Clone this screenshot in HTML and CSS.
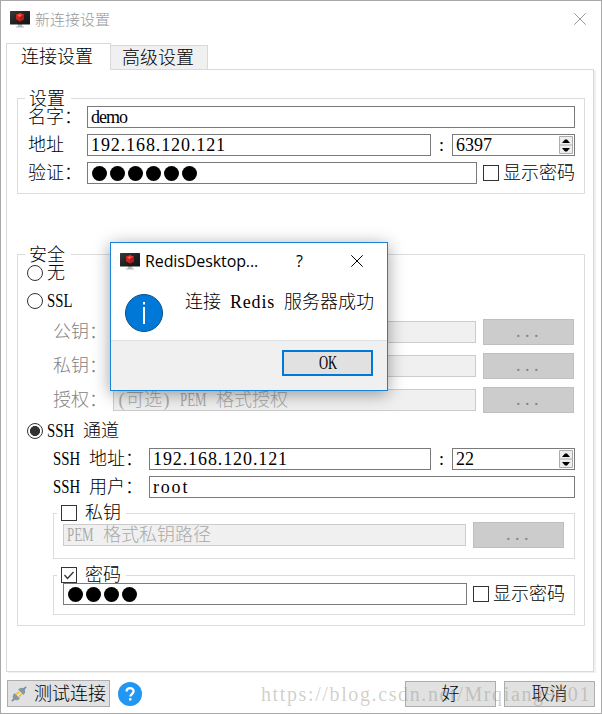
FILE: index.html
```html
<!DOCTYPE html>
<html lang="zh-CN">
<head>
<meta charset="utf-8">
<title>新连接设置</title>
<link rel="stylesheet" href="styles.css">
</head>
<body>
<svg class="defs" width="0" height="0">
  <defs>
    <linearGradient id="screen" x1="0" y1="0" x2="1" y2="1"><stop offset="0" stop-color="#3a3a3a"/><stop offset=".5" stop-color="#222"/><stop offset="1" stop-color="#111"/></linearGradient>
    <symbol id="monitor" viewBox="0 0 20 17">
      <path d="M8 13h4l.5 2.500H14v1H6v-1h1.500z" fill="#bbb"/>
      <rect width="20" height="13.500" rx=".5" fill="url(#screen)"/>
      <path d="M10 2.300l4 1.400v4.600l-4 2.200-4-2.200V3.700z" fill="#d3221c"/>
      <path d="M10 2.300l4 1.400-4 1.800-4-1.800z" fill="#ec3a33"/>
      <path d="M10 5.500v5l4-2.200V3.700z" fill="#b81a15"/>
      <path d="M8.500 4h2v1.500h-2z" fill="#ff827b"/>
    </symbol>
    <symbol id="close" viewBox="0 0 12 12"><path d="M.3.3l11.400 11.400M11.700.3L.3 11.700" stroke="currentColor" fill="none"/></symbol>
  </defs>
</svg>
<main class="window">
  <header class="titlebar">
    <svg class="app-icon"><use href="#monitor"/></svg>
    <span class="title">新连接设置</span>
    <svg class="close"><use href="#close"/></svg>
  </header>

  <nav class="tabs"><div class="tab active">连接设置</div><div class="tab">高级设置</div></nav>

  <section class="pane">
    <fieldset class="group basic">
      <legend>设置</legend>
      <div class="row"><label class="w59">名字：</label><div class="input grow"><span class="demo">demo</span></div></div>
      <div class="row"><label class="w59">地址</label><div class="input grow"><span class="ip">192.168.120.121</span></div><span class="colon">:</span>
        <div class="input spin">6397<svg class="arrows" viewBox="0 0 14 18"><path d="M.5.500h13v17H.500zM0 9h14" fill="#eee" stroke="#adadad"/><path d="M3 7h8L8 3.500H6zM3 12h8l-3 3.500H6z"/></svg></div></div>
      <div class="row"><label class="w59">验证：</label><div class="input grow dots"><i></i><i></i><i></i><i></i><i></i><i></i></div><span class="check"></span><span class="check-text">显示密码</span></div>
    </fieldset>

    <fieldset class="group security">
      <legend>安全</legend>
      <div class="option first"><span class="radio"></span>无</div>
      <div class="option second"><span class="radio"></span><span class="narrow ssl">SSL</span></div>
      <div class="indent keys">
        <div class="row key"><label class="w60">公钥：</label><div class="input off grow"></div><button class="browse">...</button></div>
        <div class="row key"><label class="w60">私钥：</label><div class="input off grow"></div><button class="browse">...</button></div>
        <div class="row key"><label class="w60">授权：</label><div class="input off grow"><span class="paren">(</span>可选<span class="paren">)</span><span class="sp"></span><span class="narrow pem">PEM</span><span class="sp"></span>格式授权</div><button class="browse">...</button></div>
      </div>
      <div class="option third"><span class="radio on"></span><span class="narrow ssh">SSH</span><span class="sp"></span>通道</div>
      <div class="indent ssh-fields">
        <div class="row"><label class="w96"><span class="narrow ssh">SSH</span><span class="sp"></span>地址：</label><div class="input grow"><span class="ip">192.168.120.121</span></div><span class="colon">:</span>
          <div class="input spin">22<svg class="arrows" viewBox="0 0 14 18"><path d="M.5.500h13v17H.500zM0 9h14" fill="#eee" stroke="#adadad"/><path d="M3 7h8L8 3.500H6zM3 12h8l-3 3.500H6z"/></svg></div></div>
        <div class="row"><label class="w96"><span class="narrow ssh">SSH</span><span class="sp"></span>用户：</label><div class="input grow"><span class="root">root</span></div></div>
        <fieldset class="sub private">
          <legend><span class="check"></span>私钥</legend>
          <div class="row key"><div class="input off grow"><span class="narrow pem">PEM</span><span class="sp"></span>格式私钥路径</div><button class="browse">...</button></div>
        </fieldset>
        <fieldset class="sub password">
          <legend><span class="check"><svg viewBox="0 0 14 14"><path d="M2.500 7l3 3.500L11.500 4" fill="none" stroke="#333" stroke-width="1.300"/></svg></span>密码</legend>
          <div class="row"><div class="input grow dots"><i></i><i></i><i></i><i></i></div><span class="check"></span><span class="check-text">显示密码</span></div>
        </fieldset>
      </div>
    </fieldset>
  </section>

  <footer class="actions">
    <button class="test"><svg width="16" height="16" viewBox="0 0 18 18"><path d="M1 17l4-4" stroke="#78909c" stroke-width="2"/><path d="M4 8l6 6c-2 2.500-5 2.500-7 .8S2 10 4 8zM8 4l6 6c2.500-2 2.500-5 .8-7S10 2 8 4z" fill="#839aa5"/><path d="M17 1l-3 3" stroke="#78909c" stroke-width="2"/><path d="M6 9.500l3-3M9 12l3-3" stroke="#ffb300" stroke-width="1.600"/></svg>测试连接</button>
    <svg class="help" viewBox="0 0 24 24"><circle cx="12" cy="12" r="12" fill="#2196f3"/><path d="M8.600 9.600C8.600 5.100 15.600 5.100 15.600 9.300c0 2.600-3.300 2.900-3.300 5.300" fill="none" stroke="#fff" stroke-width="2.300"/><path d="M11 16.200h2.500v2.300H11z" fill="#fff"/></svg>
    <button class="ok">好</button>
    <button class="cancel">取消</button>
  </footer>

  <div class="watermark">https://blog.csdn.net/Mrqiang9001</div>

  <div class="dialog">
    <header class="dialog-title"><svg class="app-icon"><use href="#monitor"/></svg><span class="dialog-name">RedisDesktop...</span><span class="question">?</span><svg class="close"><use href="#close"/></svg></header>
    <div class="dialog-body">
      <svg class="info" viewBox="0 0 38 38"><circle cx="19" cy="19" r="18.500" fill="#0078d7" stroke="#0b4f89"/><path d="M18 8h2v2.500h-2zM18 13h2v17h-2z" fill="#fff"/></svg>
      <p>连接<span class="sp"></span><span class="redis">Redis</span><span class="sp"></span>服务器成功</p>
    </div>
    <footer class="dialog-footer"><button><span class="narrow okay">OK</span></button></footer>
  </div>
</main>
</body>
</html>
```
FILE: styles.css
```css
* { box-sizing: border-box; }
body {
  margin: 0;
  background: #fff;
  color: #000;
  font: 300 18px/20px "Liberation Serif", "Noto Sans CJK SC", serif;
}
.defs { display: block; }
.window {
  position: relative;
  display: flex;
  flex-direction: column;
  width: 602px;
  height: 714px;
  border: 1px solid #a9a9a9;
  overflow: hidden;
  white-space: nowrap;
}
.titlebar {
  display: flex;
  align-items: center;
  height: 36px;
  padding: 0 15px 0 9px;
  color: #999;
}
.app-icon { width: 20px; height: 17px; flex: none; }
.title { margin-left: 5px; padding-top: 1px; font-size: 15px; flex: 1; }
.close { width: 12px; height: 12px; }

.tabs { display: flex; align-items: flex-end; height: 32px; padding-left: 5px; }
.tab {
  height: 24px;
  width: 97px;
  padding: 2px 0 0 11px;
  border: 1px solid #d9d9d9;
  border-width: 1px 1px 0 0;
  background: #f0f0f0;
}
.tab.active {
  z-index: 1;
  width: 105px;
  height: 27px;
  margin-bottom: -1px;
  padding: 3px 0 0 14px;
  border-left-width: 1px;
  background: #fff;
}
.pane {
  height: 603px;
  width: 588px;
  margin-left: 5px;
  padding: 20px 8px 0 10px;
  border: 1px solid #d9d9d9;
  box-shadow: 2px 1px 0 #f0f0f0;
}
fieldset { min-width: 0; margin: 0; border: 1px solid #dcdcdc; padding: 0; }
legend { height: 16px; line-height: 18px; padding: 0; }
.group { padding: 0 9px 9px 10px; width: 568px; }
.group > legend { margin-left: -3px; padding: 0 6px 0 4px; }
.security { margin-top: 52px; height: 380px; }

.row { display: flex; align-items: center; height: 22px; margin-bottom: 6px; }
.basic .row:last-child { margin-bottom: 0; }
.w59 { width: 59px; }
.w60 { width: 60px; }
.w96 { width: 96px; }
.input {
  display: flex;
  align-items: center;
  height: 22px;
  padding-left: 3px;
  border: 1px solid #7a7a7a;
  background: #fff;
}
.grow { flex: 1; }
.spin { width: 123px; justify-content: space-between; padding-right: 1px; }
.arrows { width: 14px; height: 18px; }
.colon { width: 21px; text-align: center; }
.dots { gap: 3px; padding-left: 4px; }
.dots i { width: 15px; height: 15px; border-radius: 50%; background: #000; }
.check {
  display: inline-block;
  flex: none;
  width: 16px;
  height: 16px;
  border: 1px solid #333;
  background: #fff;
}
.check svg { display: block; }
.row > .check { margin-left: 6px; }
.check-text { width: 72px; margin: 0 0 0 4px; }

.option { display: flex; align-items: center; height: 16px; margin-left: -1px; }
.first { margin-top: 3px; }
.second { margin-top: 12px; }
.third { margin-top: 10px; }
.radio { width: 16px; height: 16px; margin-right: 4px; border: 1px solid #333; border-radius: 50%; }
.radio.on { background: radial-gradient(circle, #333 0 4.700px, #fff 5.300px); }

.indent { margin-left: 25px; }
.keys { margin-top: 10px; color: #838383; }
.key { height: 26px; margin-bottom: 8px; }
.key:last-child { margin-bottom: 0; }
.off { border-color: #ccc; background: #f0f0f0; color: #aaa; }
button {
  display: flex;
  align-items: center;
  justify-content: center;
  padding: 0;
  border: 1px solid #adadad;
  border-radius: 0;
  background: #e1e1e1;
  color: #000;
  font: inherit;
}
.browse {
  width: 91px;
  height: 26px;
  margin: 0 1px 0 7px;
  padding: 0 0 2px 2px;
  border-color: #bfbfbf;
  background: #ccc;
  color: #838383;
  letter-spacing: 4.500px;
}
.ssh-fields { margin-top: 9px; }
.sub { padding: 0 9px; }
.sub legend { display: flex; align-items: center; margin-left: -6px; padding: 0 5px 0 4px; line-height: 18px; }
.sub legend .check { margin-right: 8px; }
.private { height: 54px; margin-top: 7px; }
.private .row { margin-top: 1px; }
.private .browse { margin-right: 1px; }
.password { height: 48px; margin-top: 8px; }

.sp { display: inline-block; width: 9px; }
.ip { letter-spacing: .9px; }
.demo { letter-spacing: -1px; }
.root { letter-spacing: 1.800px; }
.redis { letter-spacing: .8px; }
.paren { display: inline-block; width: 9px; text-align: center; }
.narrow { display: inline-block; width: 27px; transform-origin: left; }
.ssl, .ssh { transform: scaleX(.82); }
.pem { transform: scaleX(.72); }
.okay { width: 18px; transform: scaleX(.7); }

.actions { display: flex; align-items: flex-start; padding: 8px 6px 0; }
.test { width: 103px; height: 27px; gap: 7px; }
.help { width: 24px; height: 24px; margin: 2px auto 0 8px; }
.ok, .cancel { width: 91px; height: 26px; margin-top: 1px; }
.cancel { margin-left: 8px; }
.watermark {
  position: absolute;
  left: 260px;
  top: 683px;
  color: rgba(150, 150, 140, .45);
  font-size: 20px;
  letter-spacing: 1.620px;
}

.dialog {
  position: absolute;
  left: 109px;
  top: 241px;
  width: 278px;
  height: 149px;
  border: 1px solid #1883d7;
  background: #fff;
  box-shadow: 0 3px 16px rgba(0, 0, 0, .38);
}
.dialog-title { display: flex; align-items: center; height: 36px; padding: 0 24px 0 9px; }
.dialog-name { margin-left: 5px; width: 151px; font: 16px "Open Sans", sans-serif; letter-spacing: -.1px; }
.question { font: 16px "Open Sans", sans-serif; margin-right: auto; }
.dialog-body { display: flex; height: 61px; padding: 15px 0 0 14px; }
.info { width: 38px; height: 38px; }
.dialog-body p { margin: -2px 0 0 22px; }
.dialog-footer { height: 50px; padding: 9px 14px 0; border-top: 1px solid #dfdfdf; background: #f0f0f0; }
.dialog-footer button { width: 91px; height: 26px; margin-left: auto; border: 2px solid #0078d7; }
```
